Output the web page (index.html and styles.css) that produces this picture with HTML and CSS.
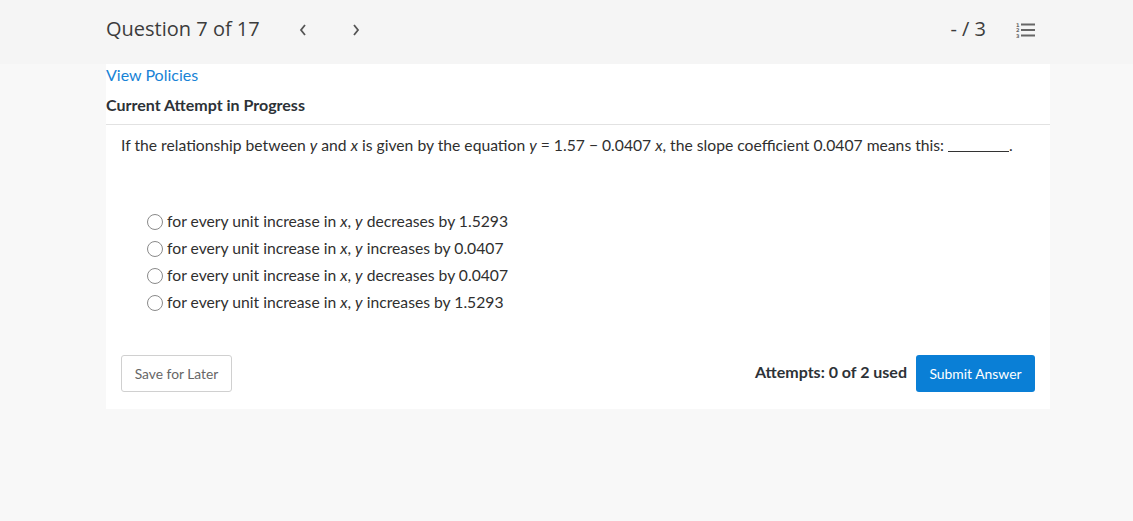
FILE: index.html
```html
<!DOCTYPE html>
<html lang="en">
<head>
<meta charset="utf-8">
<title>Question 7 of 17</title>
<link rel="stylesheet" href="styles.css">
</head>
<body>
<header class="topbar">
  <div class="topbar-left">
    <h1 class="q-title">Question 7 of 17</h1>
    <button class="nav-btn" aria-label="Previous">
      <svg width="10" height="14" viewBox="0 0 10 14"><path d="M7 2 L3 7 L7 12" fill="none" stroke="#555" stroke-width="1.8"/></svg>
    </button>
    <button class="nav-btn" aria-label="Next">
      <svg width="10" height="14" viewBox="0 0 10 14"><path d="M3 2 L7 7 L3 12" fill="none" stroke="#555" stroke-width="1.8"/></svg>
    </button>
  </div>
  <div class="topbar-right">
    <span class="score">- / 3</span>
    <svg class="list-icon" width="20" height="16" viewBox="0 0 20 16">
      <text x="0" y="4.5" font-size="5" font-family="DejaVu Sans, sans-serif" font-weight="bold" fill="#666">1</text>
      <text x="0" y="10" font-size="5" font-family="DejaVu Sans, sans-serif" font-weight="bold" fill="#666">2</text>
      <text x="0" y="15.5" font-size="5" font-family="DejaVu Sans, sans-serif" font-weight="bold" fill="#666">3</text>
      <rect x="5" y="1.5" width="14" height="2" fill="#666"/>
      <rect x="5" y="7" width="14" height="2" fill="#666"/>
      <rect x="5" y="12.5" width="14" height="2" fill="#666"/>
    </svg>
  </div>
</header>
<main class="card">
  <a class="policies" href="#">View Policies</a>
  <h2 class="attempt">Current Attempt in Progress</h2>
  <div class="question">
    <p class="prompt">If the relationship between <i>y</i> and <i>x</i> is given by the equation <i>y</i> = 1.57 − 0.0407 <i>x</i>, the slope coefficient 0.0407 means this: <span class="blank"></span>.</p>
    <ul class="options">
      <li><span class="radio"></span><span class="opt-text">for every unit increase in <i>x</i>, <i>y</i> decreases by 1.5293</span></li>
      <li><span class="radio"></span><span class="opt-text">for every unit increase in <i>x</i>, <i>y</i> increases by 0.0407</span></li>
      <li><span class="radio"></span><span class="opt-text">for every unit increase in <i>x</i>, <i>y</i> decreases by 0.0407</span></li>
      <li><span class="radio"></span><span class="opt-text">for every unit increase in <i>x</i>, <i>y</i> increases by 1.5293</span></li>
    </ul>
    <div class="actions">
      <button class="btn-save">Save for Later</button>
      <div class="actions-right">
        <span class="attempts">Attempts: 0 of 2 used</span>
        <button class="btn-submit">Submit Answer</button>
      </div>
    </div>
  </div>
</main>
</body>
</html>
```

FILE: styles.css
```css
* { box-sizing: border-box; }
html, body {
  margin: 0;
  padding: 0;
  background: #f8f8f8;
  font-family: Lato, "Liberation Sans", sans-serif;
  color: #333;
}
.topbar {
  height: 64px;
  background: #f5f5f5;
  display: flex;
  align-items: center;
  justify-content: space-between;
  padding: 0 97px 0 106px;
}
.topbar-left {
  display: flex;
  align-items: center;
}
.q-title {
  margin: 0;
  font-family: "Open Sans", sans-serif;
  font-weight: 400;
  font-size: 20px;
  color: #3c3c3c;
  padding-bottom: 7px;
  margin-right: 32px;
}
.nav-btn {
  background: none;
  border: none;
  padding: 0;
  width: 53px;
  height: 20px;
  display: flex;
  align-items: center;
  justify-content: flex-start;
  margin-bottom: 5px;
  cursor: pointer;
}
.nav-btn:first-of-type { margin-left: 6px; }
.topbar-right {
  display: flex;
  align-items: center;
  gap: 30px;
  padding-bottom: 7px;
}
.score {
  font-family: "Open Sans", sans-serif;
  font-size: 20px;
  color: #3c3c3c;
}
.list-icon { display: block; margin-top: 2px; }
.card {
  margin-left: 106px;
  width: 944px;
  background: #fff;
  padding: 0 0 17px 0;
}
.policies {
  display: block;
  font-size: 16px;
  color: #1883d6;
  text-decoration: none;
  line-height: 20px;
  padding-top: 1px;
}
.attempt {
  margin: 0;
  font-size: 16px;
  font-weight: 700;
  color: #2d3237;
  line-height: 20px;
  padding: 10px 0 9px;
  border-bottom: 1px solid #e2e2e2;
}
.question {
  padding: 0 15px;
}
.prompt {
  margin: 0;
  font-size: 15.7px;
  line-height: 20px;
  padding-top: 10px;
  color: #2f2f2f;
}
.blank {
  display: inline-block;
  width: 61px;
  border-bottom: 1px solid #333;
  vertical-align: baseline;
  margin-bottom: -1px;
}
.options {
  list-style: none;
  margin: 0;
  padding: 53px 0 0 26px;
}
.options li {
  display: flex;
  align-items: center;
  font-size: 15.7px;
  line-height: 27px;
  height: 27px;
  color: #2f2f2f;
}
.opt-text { white-space: pre; }
.radio {
  width: 16px;
  height: 16px;
  border: 1px solid #8a8a8a;
  border-radius: 50%;
  margin-right: 4px;
  flex: none;
  background: #fff;
}
.actions {
  display: flex;
  justify-content: space-between;
  align-items: center;
  margin-top: 39px;
}
.actions-right {
  display: flex;
  align-items: center;
  gap: 9px;
}
.btn-save {
  font-family: Lato, "Liberation Sans", sans-serif;
  font-size: 13.8px;
  color: #666;
  background: #fff;
  border: 1px solid #d0d0d0;
  border-radius: 3px;
  height: 37px;
  width: 111px;
  padding: 0;
}
.attempts {
  font-size: 16px;
  font-weight: 700;
  color: #2d3237;
  padding-bottom: 4px;
}
.btn-submit {
  font-family: Lato, "Liberation Sans", sans-serif;
  font-size: 13.9px;
  color: #fff;
  background: #0a7fd6;
  border: none;
  border-radius: 3px;
  height: 37px;
  width: 119px;
  padding: 0;
}
```
